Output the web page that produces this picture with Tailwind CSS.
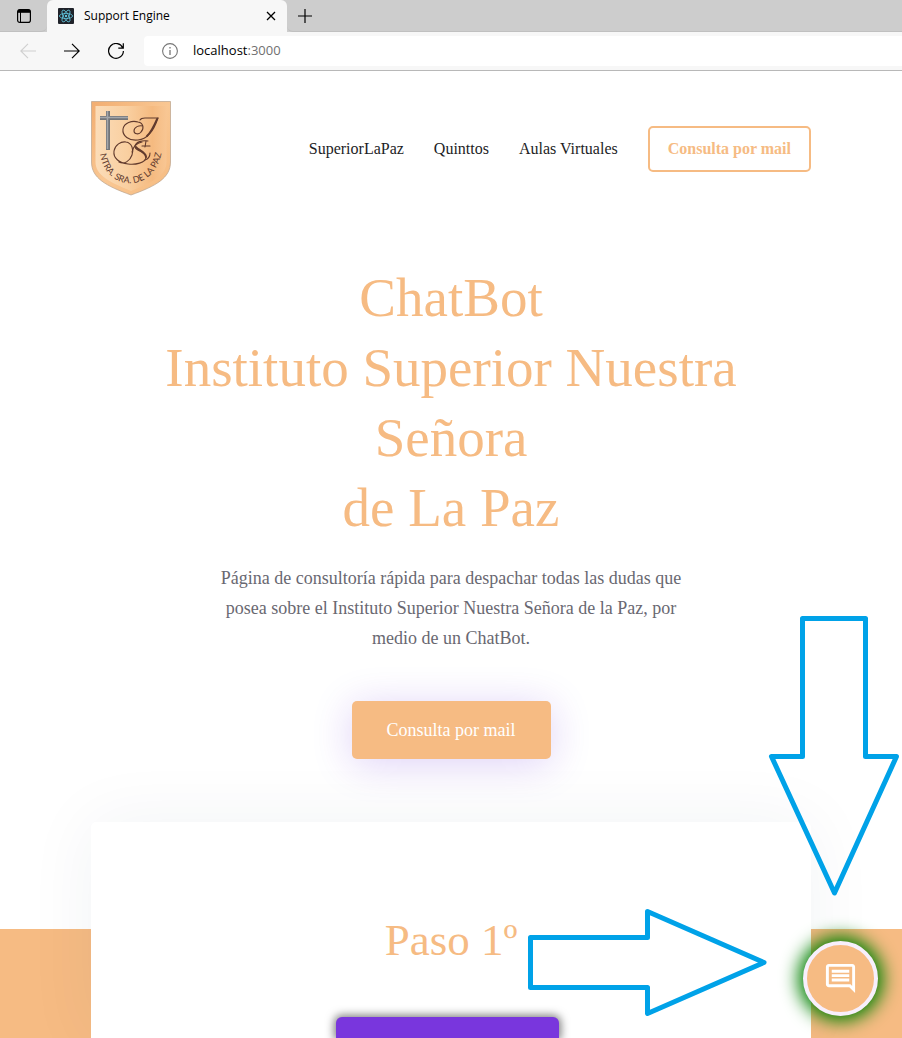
<!DOCTYPE html>
<html lang="es">
<head>
<meta charset="utf-8">
<meta name="viewport" content="width=device-width, initial-scale=1">
<title>Support Engine</title>
<script src="https://cdn.jsdelivr.net/npm/@tailwindcss/browser@4"></script>
</head>
<body class="relative flex h-screen flex-col overflow-hidden bg-white font-['Liberation_Serif',serif] text-[#1d1d25]">

<!-- Browser window -->
<div class="shrink-0 border-b border-[#b8b8b8] bg-[#f7f7f7] font-['Open_Sans','Noto_Sans',sans-serif] text-black">
  <div class="flex h-8 items-stretch bg-[#cdcdcd]">
    <button class="flex w-[47px] items-center justify-center rounded-br-md border-b border-[#c0c0c0]" aria-label="Menú de pestañas">
      <svg class="size-4" viewBox="0 0 16 16" fill="none" stroke="#000"><rect x="1.6" y="1.6" width="12.8" height="12.8" rx="2.2" stroke-width="1.2"/><path d="M2 3.3h12" stroke-width="3"/><path d="M4.5 4v10" stroke-width="1"/></svg>
    </button>
    <div class="flex w-60 items-center rounded-t-md bg-[#f7f7f7] pl-[11px] pr-[10px]">
      <svg class="size-4" viewBox="0 0 16 16" fill="none" stroke="#61c5de" stroke-width=".8"><rect width="16" height="16" rx="1" fill="#20232a" stroke="none"/><ellipse cx="8" cy="8" rx="6.6" ry="2.6"/><ellipse cx="8" cy="8" rx="6.6" ry="2.6" transform="rotate(60 8 8)"/><ellipse cx="8" cy="8" rx="6.6" ry="2.6" transform="rotate(120 8 8)"/><circle cx="8" cy="8" r="1.2" fill="#61c5de" stroke="none"/></svg>
      <span class="ml-[10px] flex-1 text-xs">Support Engine</span>
      <button class="flex size-3 items-center justify-center" aria-label="Cerrar pestaña">
        <svg class="size-3" viewBox="0 0 12 12" stroke="#000" stroke-width="1.3"><path d="M2 2l8 8M10 2l-8 8"/></svg>
      </button>
    </div>
    <button class="flex w-[35px] items-center justify-center rounded-bl-md border-b border-[#c0c0c0]" aria-label="Nueva pestaña">
      <svg class="size-4" viewBox="0 0 16 16" stroke="#000" stroke-width="1.2"><path d="M8 1v14M1 8h14"/></svg>
    </button>
    <div class="flex-1 border-b border-[#c0c0c0]"></div>
  </div>
  <div class="flex h-[38px] items-center pl-5">
    <button class="mr-7 size-4" aria-label="Atrás"><svg class="size-4" viewBox="0 0 16 16" fill="none" stroke="#cfcfcf" stroke-width="1.1"><path d="M16 8H.8M8 .8L.8 8 8 15.2"/></svg></button>
    <button class="mr-7 size-4" aria-label="Adelante"><svg class="size-4" viewBox="0 0 16 16" fill="none" stroke="#000" stroke-width="1.2"><path d="M0 8h15.2M8 .8L15.2 8 8 15.2"/></svg></button>
    <button class="mr-5 size-4" aria-label="Actualizar"><svg class="size-4" viewBox="0 0 16 16" fill="none" stroke="#000" stroke-width="1.2"><path d="M14.8 5A7.4 7.4 0 1 0 15.4 8M15.3.2V5.2H10.3"/></svg></button>
    <div class="flex h-[30px] flex-1 items-center rounded-l bg-white pl-[18px]">
      <svg class="mr-[15px] size-4" viewBox="0 0 16 16" fill="none" stroke="#767676" stroke-width="1.1"><circle cx="8" cy="8" r="7.4"/><path d="M8 7v5M8 4v1.5" stroke-width="1.3"/></svg>
      <span class="text-[13px]">localhost<span class="text-[#707070]">:3000</span></span>
    </div>
  </div>
</div>

<!-- Page header -->
<header class="mx-auto flex w-full max-w-[720px] shrink-0 items-center justify-between pt-[29px]">
  <a href="#" aria-label="Instituto Superior Nuestra Señora de la Paz">
    <svg class="h-[98px] w-20" viewBox="0 0 80 98">
      <defs>
        <linearGradient id="rim" x1="0" y1="0" x2="1" y2="1"><stop offset="0" stop-color="#f2ad70"/><stop offset=".5" stop-color="#f9c793"/><stop offset="1" stop-color="#f6bb80"/></linearGradient>
        <linearGradient id="field" x1="0" y1="0" x2="1" y2="0"><stop offset="0" stop-color="#fbdcb8"/><stop offset=".45" stop-color="#f9cfa0"/><stop offset=".8" stop-color="#f5ba80"/><stop offset="1" stop-color="#f8c693"/></linearGradient>
        <path id="motto" d="M9 53C14 94 66 94 71 49"/>
      </defs>
      <path d="M.5 1.500H79.500V62C79.500 78 65 86 40 95 15 86 .5 78 .5 62Z" fill="url(#rim)" stroke="#b9a28c" stroke-width=".7"/>
      <path d="M4.500 6H75.500V62C75.500 75 62 82 40 91 18 82 4.500 75 4.500 62Z" fill="url(#field)"/>
      <path d="M17 11v39M9 18h28" stroke="#737578" stroke-width="4"/>
      <path d="M16.500 11v38M9 17.500h28" stroke="#a3a6aa" stroke-width="1.500"/>
      <g fill="none" stroke="#613a2d" stroke-width="1.100" stroke-linecap="round">
        <path d="M49 20c1-2 3-2 5-2h13"/>
        <path d="M67 18c-3 9-8 21-20 22-9 1-16-4-15-11 1-6 9-9 15-7 6 1 6 7 3 10-2 3-7 2-7-1 0-4 5-6 9-5"/>
        <path d="M66 19c-3 7-6 13-10 17" stroke-width="1.900"/>
        <path d="M57 41c-6-1-12 1-13 5-1 5 10 5 11 11 0 6-11 8-18 7-9-1-15-6-14-13 1-6 7-10 12-9 6 1 8 8 6 13-2 6-8 10-13 7"/>
        <path d="M45 47c2 3 10 5 10 10" stroke-width="2"/>
        <path d="M55 41l-1 6M51 46h8M41 52c1-5 5-9 10-10M54 60c3-1 5-4 5-7"/>
      </g>
      <text font-family="Lato, sans-serif" font-size="9" fill="#5d382c"><textPath href="#motto" startOffset="1">NTRA. SRA. DE LA PAZ</textPath></text>
    </svg>
  </a>
  <nav class="flex items-center gap-[30px] text-base">
    <a href="#">SuperiorLaPaz</a>
    <a href="#">Quinttos</a>
    <a href="#">Aulas Virtuales</a>
    <a href="#" class="rounded-[5px] border-2 border-[#f6bb83] px-[18px] py-[9px] font-bold text-[#f6bb83]">Consulta por mail</a>
  </nav>
</header>

<main class="flex min-h-0 flex-1 flex-col">
  <section class="mx-auto flex w-full max-w-[620px] shrink-0 flex-col items-center pt-[65px] text-center">
    <h1 class="text-[55px] leading-[70px] text-[#f6bb83]">ChatBot<br>Instituto Superior Nuestra Señora<br>de La Paz</h1>
    <p class="mt-5 max-w-[480px] text-lg leading-[30px] text-[#696871]">Página de consultoría rápida para despachar todas las dudas que posea sobre el Instituto Superior Nuestra Señora de la Paz, por medio de un ChatBot.</p>
    <a href="#" class="mt-12 rounded-[5px] bg-[#f6bb83] px-[35px] py-[14px] text-lg leading-[30px] text-white shadow-[0_5px_40px_#5a1ad633]">Consulta por mail</a>
  </section>

  <section class="mt-[63px] flex min-h-0 flex-1 flex-col bg-[linear-gradient(to_bottom,transparent_107px,#f6bb83_107px)]">
    <div class="mx-auto flex w-full max-w-[720px] flex-1 flex-col items-center rounded-t-[5px] bg-white pt-[88px] shadow-[0_0_70px_#1d32500f]">
      <h2 class="text-[45px] leading-[60px] text-[#f6bb83]">Paso 1º</h2>
      <div class="mr-2 mt-[47px] w-[223px] flex-1 rounded-t-md bg-[#7936dd] shadow-[0_0_8px_2px_#00000080]"></div>
    </div>
  </section>
</main>

<!-- Chat launcher -->
<button class="absolute bottom-[22px] right-6 flex size-[75px] items-center justify-center rounded-full border-4 border-[#f7effc] bg-[#f6bb83] shadow-[0_0_18px_5px_green]" aria-label="Abrir chat">
  <svg class="size-[35px]" viewBox="0 0 24 24" fill="#fff"><path d="M21.990 4c0-1.100-.89-2-1.990-2H4c-1.100 0-2 .9-2 2v12c0 1.100.9 2 2 2h14l4 4-.01-18zM20 4v13.170L18.830 16H4V4h16zM6 12h12v2H6zm0-3h12v2H6zm0-3h12v2H6z"/></svg>
</button>

<!-- Arrows pointing to the chat launcher -->
<svg class="pointer-events-none absolute bottom-[142px] right-[3px] h-[282px] w-[132px]" viewBox="0 0 132 282" fill="none" stroke="#00a2e8" stroke-width="5" stroke-linejoin="round"><path d="M35.500 4.500H98.500V142.500H129.500L67.500 279 4.500 142.500H35.500Z"/></svg>
<svg class="pointer-events-none absolute bottom-[20px] right-[134px] h-[112px] w-[242px]" viewBox="0 0 242 112" fill="none" stroke="#00a2e8" stroke-width="5" stroke-linejoin="round"><path d="M4.500 31.500H121.500V5.500L238 56.500 121.500 107.500V81.500H4.500Z"/></svg>
</body>
</html>
